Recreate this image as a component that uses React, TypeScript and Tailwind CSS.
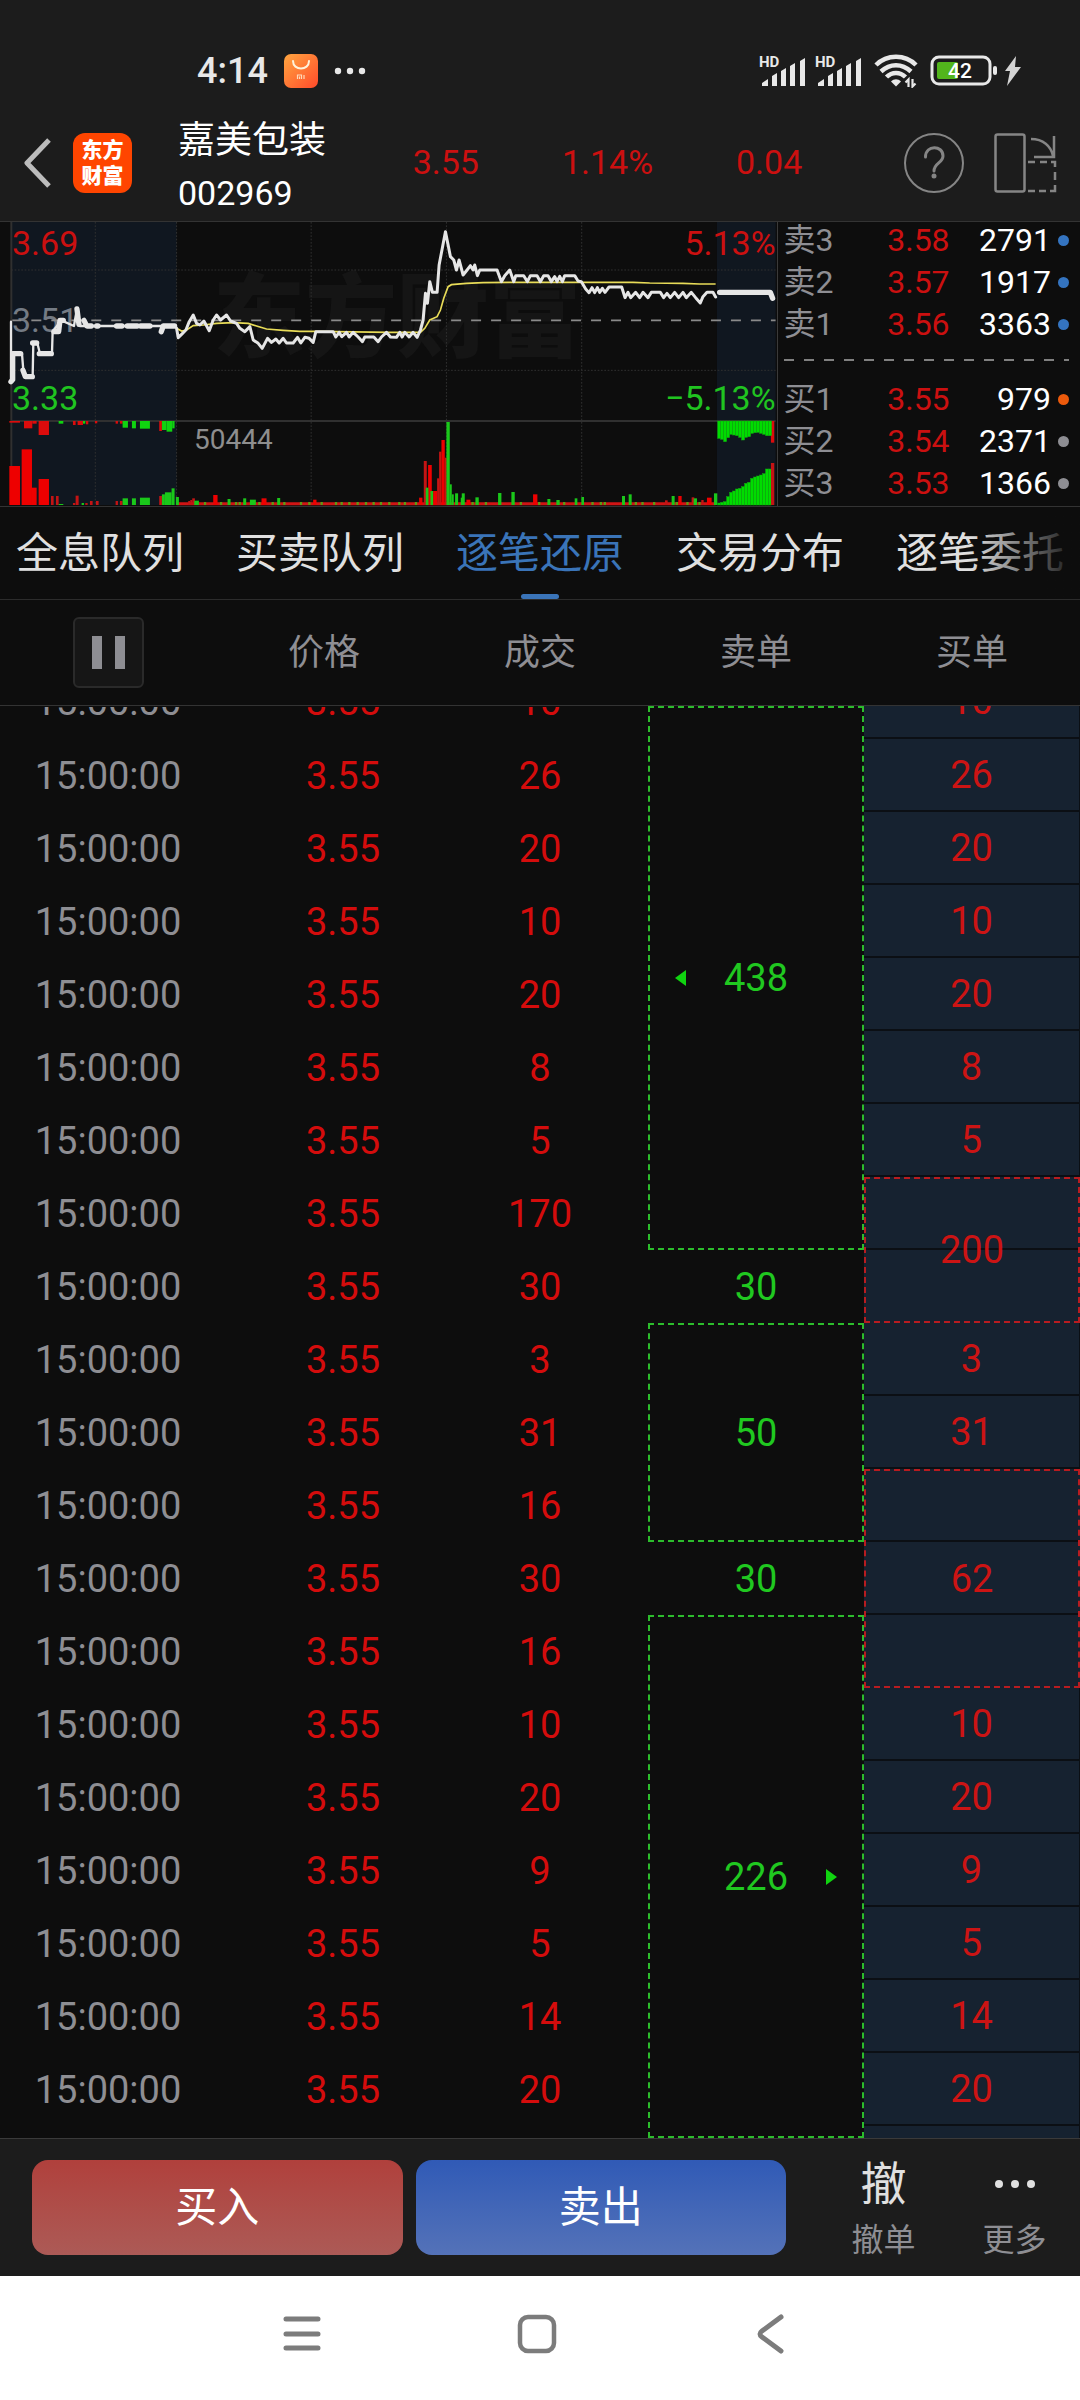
import { useState } from 'react';
import clsx from 'clsx';

type Bar = [x: number, width: number, y: number];

const tabs = ['全息队列', '买卖队列', '逐笔还原', '交易分布', '逐笔委托'];

const asks = [
  { label: '卖3', price: '3.58', qty: 2791, dot: 'bg-[#3474c0]' },
  { label: '卖2', price: '3.57', qty: 1917, dot: 'bg-[#3474c0]' },
  { label: '卖1', price: '3.56', qty: 3363, dot: 'bg-[#3474c0]' },
];

const bids = [
  { label: '买1', price: '3.55', qty: 979, dot: 'bg-[#ec5a0c]' },
  { label: '买2', price: '3.54', qty: 2371, dot: 'bg-[#8e8e93]' },
  { label: '买3', price: '3.53', qty: 1366, dot: 'bg-[#8e8e93]' },
];

// One entry per trade, the first one is cut by the top edge of the list
const volumes = [10, 26, 20, 10, 20, 8, 5, 170, 30, 3, 31, 16, 30, 16, 10, 20, 9, 5, 14, 20];

// Orders that were filled by several trades, keyed by the row they start in
const sellOrders: Record<number, { qty: number; rows: number; arrow?: 'left' | 'right' }> = {
  0: { qty: 438, rows: 8, arrow: 'left' },
  8: { qty: 30, rows: 1 },
  9: { qty: 50, rows: 3 },
  12: { qty: 30, rows: 1 },
  13: { qty: 226, rows: 8, arrow: 'right' },
};
const buyOrders: Record<number, { qty: number; rows: number }> = {
  7: { qty: 200, rows: 2 },
  11: { qty: 62, rows: 3 },
};
const coveredBuyRows = [8, 12, 13];

// Chart data, three units per pixel
const priceLine =
  '530,340 535,368 545,358 558,345 568,320 580,300 590,325 600,330 612,318 628,347 640,315 650,300 662,315 680,300 692,318 710,325 720,340 735,350 750,335 760,375 775,385 787,400 803,370 815,382 828,372 838,384 850,370 860,384 880,384 893,367 903,384 915,367 928,370 940,382 948,350 1000,350 1008,366 1018,352 1026,365 1040,352 1048,366 1060,352 1075,366 1088,380 1095,366 1122,366 1135,380 1145,366 1160,352 1172,366 1190,367 1200,352 1207,366 1215,352 1228,366 1240,352 1252,367 1262,345 1270,315 1277,235 1283,265 1290,200 1298,232 1312,232 1318,150 1337,50 1352,125 1362,135 1370,165 1378,135 1390,180 1402,165 1412,152 1420,165 1425,150 1433,182 1440,165 1492,165 1505,200 1515,182 1530,165 1542,200 1548,182 1572,182 1583,200 1592,182 1612,182 1622,200 1632,182 1645,182 1655,200 1665,185 1672,200 1680,184 1688,200 1695,182 1725,182 1735,198 1745,200 1758,222 1768,233 1777,218 1785,233 1793,218 1800,232 1808,220 1816,232 1828,216 1866,216 1876,248 1885,232 1893,248 1908,232 1920,248 1930,232 1945,248 1955,232 1982,232 1992,248 2002,235 2012,248 2025,232 2037,248 2050,232 2060,248 2075,232 2088,248 2102,264 2110,245 2122,232 2140,232 2148,246';
const averageLine =
  '530,340 545,348 560,345 580,332 610,330 650,325 700,323 745,325 770,333 800,342 850,346 900,349 950,349 1170,352 1262,352 1275,340 1290,315 1312,305 1322,285 1332,250 1345,215 1355,209 1400,205 1450,203 1550,202 1900,202 1950,204 2050,205 2100,207 2148,207';

const redBars: Bar[] = [
  [28, 32, 753], [65, 31, 703], [96, 14, 818], [116, 31, 792], [153, 8, 843], [168, 8, 843], [219, 7, 864],
  [227, 9, 842], [256, 7, 864], [270, 8, 858], [288, 8, 858], [347, 7, 858], [360, 8, 858], [478, 8, 843],
  [565, 6, 858], [571, 6, 855], [577, 8, 850], [640, 13, 840], [785, 15, 850], [940, 10, 854], [1258, 10, 848],
  [1272, 9, 738], [1285, 11, 750], [1300, 12, 828], [1312, 6, 790], [1318, 7, 710], [1325, 10, 675], [1335, 6, 728],
  [1400, 12, 854], [1600, 13, 838], [1996, 8, 856], [2036, 10, 843], [2076, 8, 847], [2105, 7, 855], [2122, 14, 848],
];
const greenBars: Bar[] = [
  [176, 14, 867], [245, 7, 864], [368, 16, 850], [396, 12, 850], [420, 30, 848], [486, 9, 838], [495, 20, 832],
  [515, 9, 820], [528, 9, 846], [583, 14, 857], [683, 9, 852], [730, 9, 850], [750, 18, 854], [832, 9, 849],
  [1278, 8, 818], [1292, 8, 828], [1340, 10, 621], [1350, 6, 808], [1356, 6, 838], [1366, 9, 835], [1383, 6, 848],
  [1386, 9, 835], [1427, 10, 847], [1495, 10, 834], [1535, 10, 831], [1643, 9, 852], [1670, 10, 855], [1725, 8, 850],
  [1745, 8, 846], [1867, 9, 843], [1887, 9, 838], [2016, 9, 843], [2082, 10, 850], [2143, 10, 835],
];
const greenTicks = [
  612, 660, 705, 716, 775, 815, 850, 900, 925, 962, 1005, 1022, 1045, 1070, 1095, 1118, 1140, 1165, 1195, 1212, 1245,
  1415, 1455, 1560, 1615, 1690, 1775, 1800, 1812, 1905, 1925, 1960, 2028, 2060, 2096,
];
// Bars that hang from the top edge of the volume pane: x, width, bottom
const redHanging: Bar[] = [
  [28, 32, 623], [72, 25, 640], [97, 13, 626], [116, 31, 660], [219, 8, 630], [233, 16, 630], [258, 7, 628],
  [285, 7, 625], [347, 7, 626], [360, 8, 626], [478, 8, 648], [2314, 10, 683],
];
const greenHanging: Bar[] = [
  [176, 14, 626], [249, 7, 626], [368, 16, 638], [396, 12, 640], [420, 30, 641], [486, 14, 645], [500, 17, 650],
  [517, 7, 640],
];
const closeTop = [670, 673, 680, 668, 658, 660, 662, 667, 675, 667, 665, 655, 653, 652, 655, 658, 662, 662];
const closeBottom = [864, 862, 860, 845, 832, 828, 822, 820, 815, 805, 802, 790, 786, 783, 780, 776, 762, 762];

function SignalIcon() {
  return (
    <svg width="46" height="32" viewBox="0 0 46 32" fill="#e8e8e8" overflow="visible">
      <text x="-1" y="12" fontSize="15" fontWeight="700">
        HD
      </text>
      <path d="M2 31V28L8 24V31ZM12 31V21L17 18V31ZM21 31V16L26 13V31ZM30 31V11L35 8V31ZM40 31V6L45 3V31Z" />
    </svg>
  );
}

function StatusBar() {
  return (
    <div className="flex h-[92px] items-center pt-[50px] pl-[197px] text-[#e8e8e8]">
      <span className="text-4xl font-medium">4:14</span>
      <svg className="ml-4" width="34" height="34" viewBox="0 0 34 34" fill="none">
        <defs>
          <linearGradient id="store" x1="0" y1="0" x2="1" y2="1">
            <stop offset="0" stopColor="#ffa640" />
            <stop offset="1" stopColor="#ff4a2a" />
          </linearGradient>
        </defs>
        <rect width="34" height="34" rx="7" fill="url(#store)" />
        <path d="M9 7C9 17 25 17 25 7" stroke="#fff3da" strokeWidth="2" strokeLinecap="round" />
        <path d="M13.500 25V21H17.500V25M15.500 22.500V25M20 21V25" stroke="#ffd9b8" strokeWidth="1.200" />
      </svg>
      <svg className="ml-4" width="32" height="8" viewBox="0 0 32 8" fill="#e8e8e8">
        <circle cx="4" cy="4" r="3.200" />
        <circle cx="16" cy="4" r="3.200" />
        <circle cx="28" cy="4" r="3.200" />
      </svg>
      <div className="ml-auto flex items-center pr-[58px]">
        <SignalIcon />
        <span className="w-[10px]" />
        <SignalIcon />
        <svg className="ml-3" width="44" height="34" viewBox="0 0 44 34" fill="none" stroke="#e8e8e8">
          <path d="M2 11C13 0 31 0 42 11" strokeWidth="4.500" />
          <path d="M7 17.500C16 9 28 9 37 17.500" strokeWidth="4.500" />
          <path d="M12.500 23C18 17.500 26 17.500 31.500 23" strokeWidth="4.500" />
          <path d="M22 32.500L17 27.500C20 24.500 24 24.500 27 27.500Z" fill="#e8e8e8" stroke="none" />
          <path d="M34.500 33V25.500L31.500 28.500M38.500 25V32.500L41.500 29.500" strokeWidth="2.200" />
        </svg>
        <svg className="ml-3" width="92" height="32" viewBox="0 0 92 32" fill="none">
          <rect x="2" y="2" width="58" height="27" rx="7" stroke="#e8e8e8" strokeWidth="3" />
          <rect x="7" y="7" width="21" height="17" rx="2" fill="#52b51c" />
          <rect x="63" y="11" width="4" height="9" rx="2" fill="#e8e8e8" />
          <text x="30" y="23" fontSize="21" fontWeight="500" textAnchor="middle" fill="#ffffff">
            42
          </text>
          <path d="M86 1L75 16H80L77 31L91 12H85Z" fill="#d4d4d4" />
        </svg>
      </div>
    </div>
  );
}

function Header() {
  return (
    <header className="flex h-[129px] items-center pt-3 pr-[23px] pl-6">
      <button aria-label="返回">
        <svg width="27" height="50" viewBox="0 0 27 50" fill="none" stroke="#bcbcbc" strokeWidth="5">
          <path d="M25 2L3 25L25 48" strokeLinejoin="round" />
        </svg>
      </button>
      <div className="ml-[22px] flex h-[60px] w-[59px] flex-col items-center justify-center rounded-xl bg-[#ff4500] text-[21px] leading-[26px] font-black text-white">
        <span>东方</span>
        <span>财富</span>
      </div>
      <div className="ml-[46px] w-[187px] pt-2 text-white">
        <h1 className="text-[37px] leading-[52px]">嘉美包装</h1>
        <p className="text-[34px] leading-[52px]">002969</p>
      </div>
      <div className="grid flex-1 grid-cols-3 text-center text-[34px] text-[#cb1010]">
        <span>3.55</span>
        <span>1.14%</span>
        <span>0.04</span>
      </div>
      <button className="ml-[54px]" aria-label="帮助">
        <svg width="60" height="62" viewBox="0 0 60 62" fill="none" stroke="#858585" strokeWidth="2">
          <circle cx="30" cy="31" r="29" />
          <path
            d="M21.500 25C21.500 12.500 39 13 39 24C39 31 30 31 30 39"
            strokeWidth="3"
            strokeLinecap="round"
          />
          <circle cx="30" cy="44" r="2.500" fill="#858585" stroke="none" />
        </svg>
      </button>
      <button className="ml-[30px]" aria-label="横屏">
        <svg width="63" height="60" viewBox="0 0 63 60" fill="none" stroke="#858585" strokeWidth="2.500">
          <rect x="1.500" y="1.500" width="29" height="57" rx="2" />
          <path d="M37 6C49 6 57 13 59 23M60 3V24H40" />
          <path d="M34 29H41M46 29H53M57 29H61V34M61 39V47M61 52V58H56M52 58H45M41 58H34" />
        </svg>
      </button>
    </header>
  );
}

function Chart() {
  return (
    <div className="relative w-[72%] overflow-hidden border-r border-[#3a3a3a]">
      <span className="absolute top-[40px] left-[213px] text-[92px] leading-[114px] font-black whitespace-nowrap text-[#151515]">
        东方财富
      </span>
      <span className="absolute top-[82px] left-3 text-[34px] leading-8 text-[#8e8e8e]">3.51</span>
      <svg className="relative h-[284px] w-full" viewBox="0 21 2331 852" preserveAspectRatio="none" fill="none">
        <path d="M34 21H530V870H34ZM2152 21H2328V870H2152Z" fill="#1c3c64" fillOpacity="0.22" />
        <path
          d="M34 165H2328M34 466H2328M286 21V870M530 21V870M934 21V870M1340 21V870M1746 21V870"
          stroke="#303030"
          strokeWidth="3"
          strokeDasharray="5 5"
        />
        <path d="M34 316H2328" stroke="#8a8a8a" strokeWidth="5" strokeDasharray="30 30" />
        <path d="M34 21V870M34 618H2328" stroke="#303030" strokeWidth="6" />

        <path d="M530 866H2148" stroke="#d01414" strokeWidth="9" />
        {redBars.map(([x, w, y]) => (
          <rect key={x} x={x} y={y} width={w} height={870 - y} fill={w > 9 ? '#ee0000' : '#c41414'} />
        ))}
        {greenBars.map(([x, w, y]) => (
          <rect key={x} x={x} y={y} width={w} height={870 - y} fill="#1ac81a" />
        ))}
        {greenTicks.map((x) => (
          <rect key={x} x={x} y="861" width="7" height="9" fill="#5c9c14" />
        ))}
        {redHanging.map(([x, w, y]) => (
          <rect key={x} x={x} y="618" width={w} height={y - 618} fill="#dc0c0c" />
        ))}
        {greenHanging.map(([x, w, y]) => (
          <rect key={x} x={x} y="618" width={w} height={y - 618} fill="#10d410" />
        ))}
        {closeTop.map((y, i) => (
          <g key={i} fill="#00dc00" stroke="#10a810" strokeWidth="1.500">
            <rect x={2154 + i * 9} y="618" width="9" height={y - 618} />
            <rect x={2154 + i * 9} y={closeBottom[i]} width="9" height={870 - closeBottom[i]} />
          </g>
        ))}
        <rect x="2314" y="744" width="10" height="126" fill="#c41414" />

        <polyline points={averageLine} stroke="#e8dc58" strokeWidth="5" />
        <g stroke="#e6e6e6" strokeLinejoin="round" strokeLinecap="round">
          <path
            d="M33 320V500M37 416H66L70 466L76 486H98L100 384H112L120 416H156L158 350L184 316L222 333L231 282L240 333H526"
            strokeWidth="7"
          />
          <path
            d="M33 500L38 494V416H62M69 466L76 485H97M98 384H110M118 416H154M162 350H176L180 316H190M231 282L237 328M252 316L260 332M262 333H274M290 333H294M350 333H366M382 333H412M422 333H450M484 350L490 333H524"
            strokeWidth="16"
          />
          <polyline points={priceLine} strokeWidth="9" />
          <path d="M2160 232H2312L2319 250" strokeWidth="16" />
        </g>
      </svg>
      <span className="absolute top-[5px] left-3 text-[34px] leading-8 text-[#cb1010]">3.69</span>
      <span className="absolute top-[160px] left-3 text-[34px] leading-8 text-[#20c420]">3.33</span>
      <span className="absolute top-[5px] right-px text-[34px] leading-8 text-[#cb1010]">5.13%</span>
      <span className="absolute top-[160px] right-px text-[34px] leading-8 text-[#20c420]">−5.13%</span>
      <span className="absolute top-[202px] left-[194px] text-[28px] leading-8 text-[#8e8e8e]">50444</span>
    </div>
  );
}

function QuoteRow({ label, price, qty, dot }: (typeof asks)[number]) {
  return (
    <tr className="h-[42px]">
      <td className="w-[60px] text-left leading-8 whitespace-nowrap text-[#8e8e93]">{label}</td>
      <td className="w-[106px] text-right text-[#cb1010]">{price}</td>
      <td className="text-right text-white">{qty}</td>
      <td className="w-[18px]">
        <div className={clsx('ml-auto size-[11px] rounded-full', dot)} />
      </td>
    </tr>
  );
}

function OrderBook() {
  return (
    <div className="flex-1 pr-[11px] pl-[6px]">
      <table className="-mt-[3px] w-full table-fixed text-[32px] leading-8">
        <tbody>
          {asks.map((row) => (
            <QuoteRow key={row.label} {...row} />
          ))}
          <tr className="h-[33px]">
            <td colSpan={4}>
              <div className="mb-1 h-[2px] bg-[repeating-linear-gradient(to_right,#808080_0_10px,transparent_10px_20px)]" />
            </td>
          </tr>
          {bids.map((row) => (
            <QuoteRow key={row.label} {...row} />
          ))}
        </tbody>
      </table>
    </div>
  );
}

function TradeList() {
  return (
    <table className="w-full table-fixed border-separate border-spacing-0 text-center text-[38px] leading-none">
      <tbody>
        {volumes.map((volume, i) => {
          const sell = sellOrders[i];
          const buy = buyOrders[i];
          // the first row is scrolled half out of view
          const cell = i === 0 ? 'flex h-[31px] items-end justify-center overflow-hidden leading-[71px]' : '';
          return (
            <tr key={i} className={i === 0 ? 'h-[33px]' : 'h-[73px]'}>
              <td className="text-[#8e8e93]">
                <div className={cell}>15:00:00</div>
              </td>
              <td className="pl-[38px] text-[#d40c0c]">
                <div className={cell}>3.55</div>
              </td>
              <td className="text-[#d40c0c]">
                <div className={cell}>{volume}</div>
              </td>
              {sell && (
                <td
                  rowSpan={sell.rows}
                  className={clsx('text-[#20c820]', sell.rows > 1 && 'border-2 border-dashed border-[#2cbc2c]')}
                >
                  <div className="flex items-center justify-between px-6">
                    <svg width="12" height="16" viewBox="0 0 12 16" fill="#10d410">
                      {sell.arrow === 'left' && <path d="M12 0V16L1 8Z" />}
                    </svg>
                    <span>{sell.qty}</span>
                    <svg width="12" height="16" viewBox="0 0 12 16" fill="#10d410">
                      {sell.arrow === 'right' && <path d="M0 0V16L11 8Z" />}
                    </svg>
                  </div>
                </td>
              )}
              {buy && (
                <td
                  rowSpan={buy.rows}
                  className="border-2 border-dashed border-[#b81c20] bg-[repeating-linear-gradient(to_bottom,#162230_0_69px,#0b0f14_69px_71px,#162230_71px_73px)] text-[#cc1414]"
                >
                  {buy.qty}
                </td>
              )}
              {!buy && !coveredBuyRows.includes(i) && (
                <td className="border-r border-b-2 border-[#0b0f14] bg-[#162230] text-[#cc1414]">
                  <div className={cell}>{volume}</div>
                </td>
              )}
            </tr>
          );
        })}
        <tr className="h-3">
          <td colSpan={3} />
          <td className="border-r border-[#0b0f14] bg-[#162230]" />
        </tr>
      </tbody>
    </table>
  );
}

export default function App() {
  const [activeTab, setActiveTab] = useState('逐笔还原');
  const [paused, setPaused] = useState(false);

  return (
    <div className="flex min-h-screen flex-col bg-[#0d0d0d] font-['Roboto','Noto_Sans_CJK_SC',sans-serif]">
      <div className="border-b border-[#333333] bg-[#1c1c1c]">
        <StatusBar />
        <Header />
      </div>

      <section className="flex h-[285px] border-b border-[#333333]">
        <Chart />
        <OrderBook />
      </section>

      {/* Tabs */}
      <nav className="relative flex h-[93px] gap-[52px] overflow-hidden border-b border-[#2c2c2c] pl-4 text-[42px] whitespace-nowrap">
        {tabs.map((tab) => (
          <button
            key={tab}
            onClick={() => setActiveTab(tab)}
            className={clsx('relative shrink-0', activeTab === tab ? 'text-[#3a74b8]' : 'text-[#e0e0e0]')}
          >
            {tab}
            {activeTab === tab && (
              <span className="absolute bottom-0 left-1/2 h-[5px] w-[38px] -translate-x-1/2 rounded-full bg-[#3a74b8]" />
            )}
          </button>
        ))}
        <div className="pointer-events-none absolute inset-y-0 right-0 w-[110px] bg-linear-to-r from-transparent to-[#0d0d0d]" />
      </nav>

      <table className="w-full table-fixed border-separate border-spacing-0 text-4xl text-[#8e8e93]">
        <thead>
          <tr className="h-[106px]">
            <th className="border-b border-[#333333]">
              <button
                onClick={() => setPaused(!paused)}
                aria-label="暂停"
                className="mx-auto flex size-[71px] items-center justify-center gap-[13px] rounded-md border-2 border-[#2a2a2a] bg-[#161616]"
              >
                <span className="h-[33px] w-[10px] bg-[#8e8e93]" />
                <span className="h-[33px] w-[10px] bg-[#8e8e93]" />
              </button>
            </th>
            <th className="border-b border-[#333333] font-normal">价格</th>
            <th className="border-b border-[#333333] font-normal">成交</th>
            <th className="border-b border-[#333333] font-normal">卖单</th>
            <th className="border-b border-[#333333] font-normal">买单</th>
          </tr>
        </thead>
      </table>

      <main className="flex-1">
        <TradeList />
      </main>

      {/* Order actions */}
      <footer className="flex h-[138px] items-center border-t border-[#3a3a3a] bg-[#1c1c1c] pl-8">
        <div className="flex flex-1 gap-[13px] text-[42px] text-white">
          <button className="h-[95px] flex-1 rounded-2xl bg-linear-to-b from-[#b0403c] to-[#ac5a56]">买入</button>
          <button className="h-[95px] flex-1 rounded-2xl bg-linear-to-b from-[#305ab6] to-[#5472b8]">卖出</button>
        </div>
        <button className="ml-8 flex w-[131px] flex-col items-center pt-2">
          <span className="text-[46px] leading-[56px] text-[#e0e0e0]">撤</span>
          <span className="text-[32px] leading-[56px] text-[#8e8e93]">撤单</span>
        </button>
        <button className="flex w-[131px] flex-col items-center pt-2">
          <span className="flex h-[56px] items-center gap-2">
            <span className="size-2 rounded-full bg-[#e0e0e0]" />
            <span className="size-2 rounded-full bg-[#e0e0e0]" />
            <span className="size-2 rounded-full bg-[#e0e0e0]" />
          </span>
          <span className="text-[32px] leading-[56px] text-[#8e8e93]">更多</span>
        </button>
      </footer>

      {/* System navigation */}
      <div className="flex h-[124px] items-start justify-center gap-[196px] bg-white pt-[38px] pr-[6px]">
        <button aria-label="最近任务">
          <svg width="38" height="40" viewBox="0 0 38 40" stroke="#7c7c7c" strokeWidth="5" strokeLinecap="round">
            <path d="M3 5H35M3 20H35M3 34H35" />
          </svg>
        </button>
        <button aria-label="主屏幕">
          <svg width="40" height="40" viewBox="0 0 40 40" fill="none" stroke="#7c7c7c" strokeWidth="4.500">
            <rect x="3" y="3" width="34" height="34" rx="8" />
          </svg>
        </button>
        <button aria-label="返回上一页">
          <svg width="38" height="40" viewBox="0 0 38 40" fill="none" stroke="#7c7c7c" strokeWidth="5">
            <path d="M28 3L9 17Q5 20 9 23L28 37" strokeLinecap="round" />
          </svg>
        </button>
      </div>
    </div>
  );
}
